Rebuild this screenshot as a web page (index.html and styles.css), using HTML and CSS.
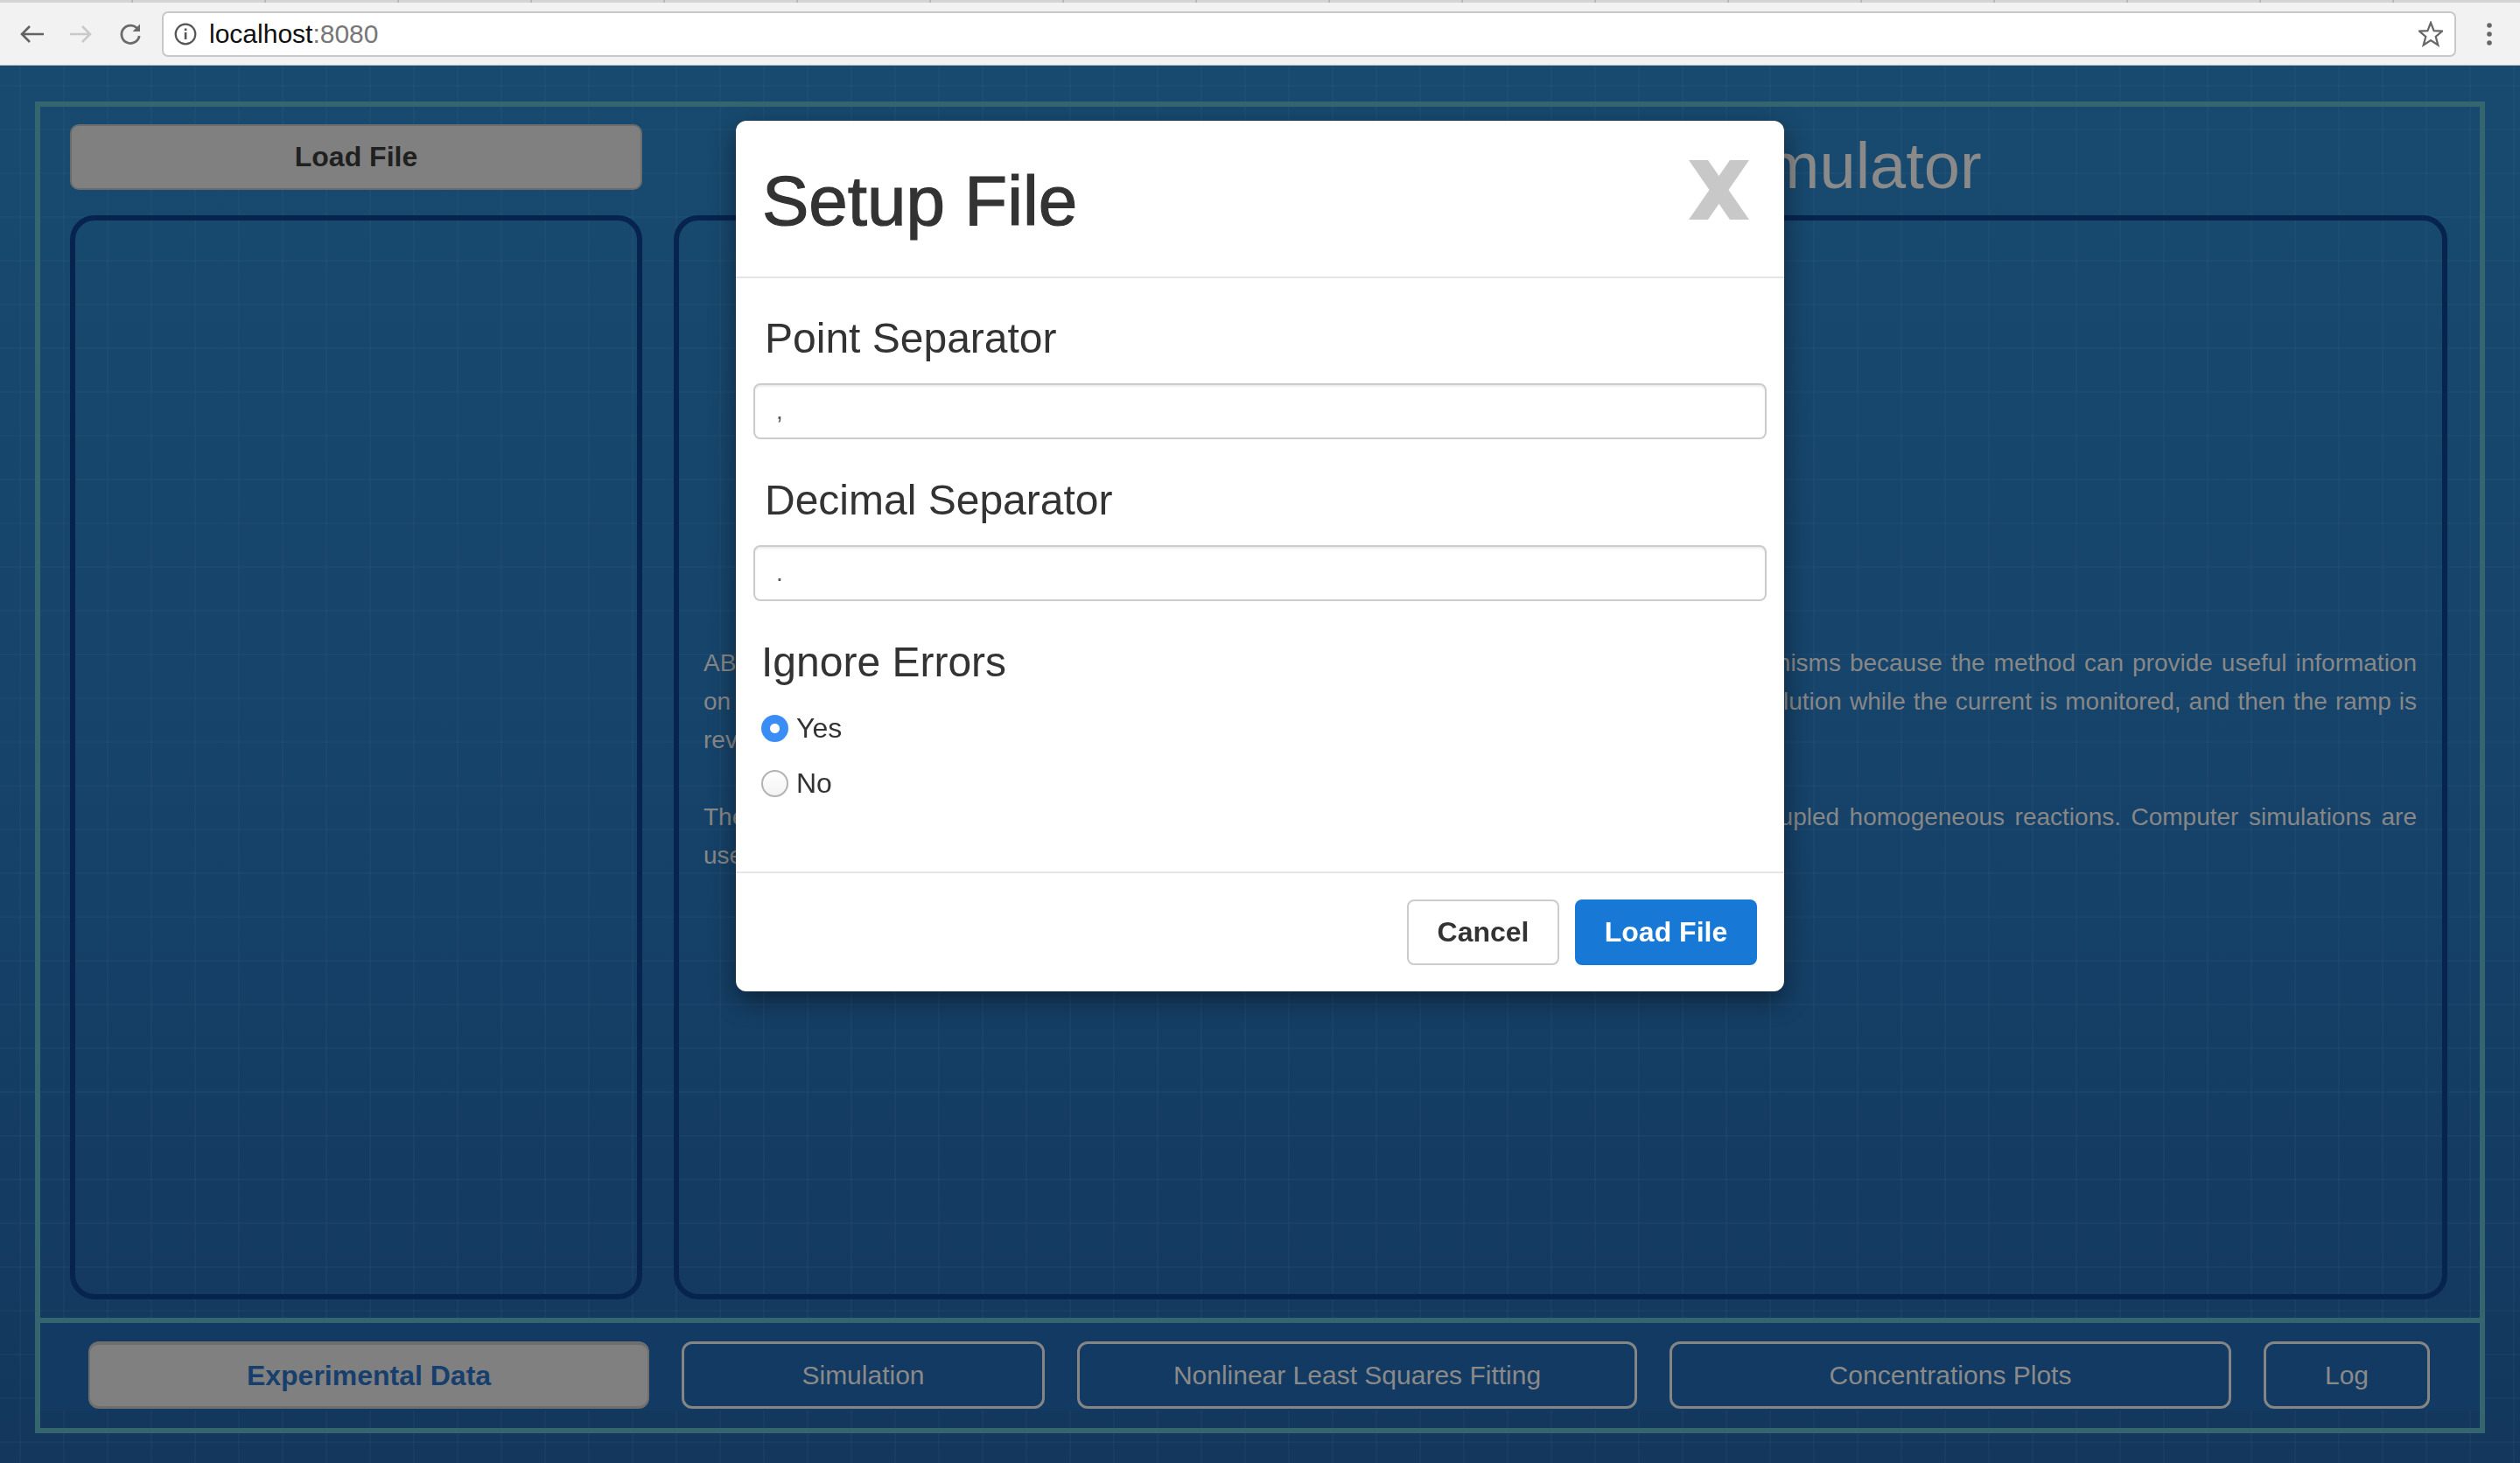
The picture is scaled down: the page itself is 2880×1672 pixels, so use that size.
FILE: index.html
```html
<!DOCTYPE html>
<html lang="en">
<head>
<meta charset="utf-8">
<title>Simulator</title>
<link rel="stylesheet" href="styles.css">
</head>
<body>
<div class="chrome">
  <div class="tabstrip"></div>
  <div class="toolbar">
    <svg class="ico ico-back" width="30" height="24" viewBox="0 0 30 24"><path d="M29 12H4M13 3L4 12l9 9" fill="none" stroke="#626262" stroke-width="2.6"/></svg>
    <svg class="ico ico-fwd" width="26" height="24" viewBox="0 0 26 24"><path d="M0 12h23M14 3l9 9-9 9" fill="none" stroke="#c9c9c9" stroke-width="2.6"/></svg>
    <svg class="ico ico-reload" width="28" height="28" viewBox="0 0 28 28"><path d="M22.6 8.6A10.2 10.2 0 1 0 24.2 16" fill="none" stroke="#6a6a6a" stroke-width="2.8"/><path d="M25 2.5V11h-8.5z" fill="#6a6a6a"/></svg>
    <div class="urlbar">
      <svg class="ico-info" width="26" height="26" viewBox="0 0 26 26"><circle cx="13" cy="13" r="11.3" fill="none" stroke="#555" stroke-width="2.2"/><rect x="11.8" y="11" width="2.6" height="8" fill="#555"/><rect x="11.8" y="6.5" width="2.6" height="2.6" fill="#555"/></svg>
      <span class="host">localhost</span><span class="port">:8080</span>
      <span class="spacer"></span>
      <svg class="ico-star" width="28" height="30" viewBox="0 0 28 30"><path d="M14 2l3.6 9.2 9.6.4-7.5 6.2 2.6 9.6L14 22l-8.3 5.4 2.6-9.6L.8 11.6l9.6-.4z" fill="none" stroke="#666" stroke-width="2.2" stroke-linejoin="miter"/></svg>
    </div>
    <svg class="ico-menu" width="8" height="26" viewBox="0 0 8 26"><circle cx="4" cy="3" r="2.8" fill="#666"/><circle cx="4" cy="13" r="2.8" fill="#666"/><circle cx="4" cy="23" r="2.8" fill="#666"/></svg>
  </div>
</div>

<div class="page">
  <div class="frame">
    <div class="main">
      <button class="btn-load">Load File</button>
      <h1 class="app-title">Cyclic Voltammetry Simulator</h1>
      <div class="panel panel-left"></div>
      <div class="panel panel-right">
        <div class="about">
          <p>
            <span class="ln">ABSTRACT: Cyclic voltammetry is widely used to examine electrochemical redox reaction mechanisms because the method can provide useful information</span>
            <span class="ln">on the thermodynamics and kinetics of a system. The potential is moved linearly in an unstirred solution while the current is monitored, and then the ramp is</span>
            <span class="ln last">reversed to return to the initial potential.</span>
          </p>
          <p>
            <span class="ln">The shape of the voltammogram depends on the rate of interfacial electron transfer and any coupled homogeneous reactions. Computer simulations are</span>
            <span class="ln last">used to interpret experimental voltammograms.</span>
          </p>
        </div>
      </div>
    </div>
    <div class="navband">
      <div class="navrow">
        <button class="tab tab-active w-wide">Experimental Data</button>
        <button class="tab w-mid">Simulation</button>
        <button class="tab w-wide2">Nonlinear Least Squares Fitting</button>
        <button class="tab w-wide3">Concentrations Plots</button>
        <button class="tab w-small">Log</button>
      </div>
    </div>
  </div>
</div>

<div class="modal-layer">
  <div class="modal">
    <div class="modal-header">
      <h2 class="modal-title">Setup File</h2>
      <button class="close" aria-label="Close"><svg width="69" height="68" viewBox="0 0 69 68"><polygon points="0,0 22,0 69,68 47,68" fill="#c8c8c8"/><polygon points="47,0 69,0 22,68 0,68" fill="#c8c8c8"/></svg></button>
    </div>
    <div class="modal-body">
      <label class="field-label">Point Separator</label>
      <input class="form-control" type="text" value=",">
      <label class="field-label field-gap">Decimal Separator</label>
      <input class="form-control" type="text" value=".">
      <div class="field-label field-gap label-ignore">Ignore Errors</div>
      <label class="radio radio-first"><span class="radio-dot checked"></span>Yes</label>
      <label class="radio"><span class="radio-dot"></span>No</label>
    </div>
    <div class="modal-footer">
      <button class="btn btn-default">Cancel</button>
      <button class="btn btn-primary">Load File</button>
    </div>
  </div>
</div>
</body>
</html>
```

FILE: styles.css
```css
* { box-sizing: border-box; }
html, body { margin: 0; padding: 0; }
body {
  width: 2880px;
  height: 1672px;
  overflow: hidden;
  font-family: "Liberation Sans", Arial, sans-serif;
  background: #13365c;
}
button { font-family: inherit; cursor: pointer; }

/* ---------- browser chrome ---------- */
.chrome {
  height: 75px;
  background: #f2f2f2;
  border-bottom: 1px solid #bcbcbc;
}
.tabstrip {
  height: 3px;
  background: #d4d4d4;
  background-image: repeating-linear-gradient(90deg, transparent 0 150px, #b8b8b8 150px 152px);
}
.toolbar {
  height: 71px;
  display: flex;
  align-items: center;
  padding: 0 31px 0 21px;
}
.ico-fwd { margin-left: 29px; }
.ico-reload { margin-left: 29px; }
.urlbar {
  margin-left: 22px;
  flex: 1;
  height: 52px;
  background: #fff;
  border: 2px solid #c8c8c8;
  border-radius: 7px;
  display: flex;
  align-items: center;
  padding: 0 13px 0 12px;
  font-size: 30px;
}
.ico-info { margin-right: 14px; }
.host { color: #111; }
.port { color: #777; }
.spacer { flex: 1; }
.ico-menu { margin-left: 34px; }

/* ---------- page ---------- */
.page {
  height: 1597px;
  padding: 41px 40px 0;
  background-color: #164268;
  background-image:
    linear-gradient(rgba(255,255,255,0.022) 2px, transparent 2px),
    linear-gradient(90deg, rgba(255,255,255,0.022) 2px, transparent 2px),
    linear-gradient(180deg, #184a6f 0%, #16436a 50%, #13375d 100%);
  background-size: 50px 50px, 50px 50px, 100% 100%;
  background-position: 22px 22px, 22px 22px, 0 0;
}
.frame {
  height: 1522px;
  border: 6px solid #35666f;
  display: flex;
  flex-direction: column;
}
.main {
  flex: 1;
  display: grid;
  grid-template-columns: 654px 1fr;
  grid-template-rows: 75px 1fr;
  column-gap: 36px;
  row-gap: 29px;
  padding: 20px 37px 21px 34px;
  border-bottom: 6px solid #35666f;
}
.btn-load {
  height: 75px;
  background: #808080;
  border: 2px solid #6c6c6c;
  border-radius: 10px;
  color: #202020;
  font-size: 32px;
  font-weight: bold;
}
.app-title {
  margin: 10px 0 0;
  font-size: 74px;
  line-height: 75px;
  font-weight: normal;
  color: #8a8a8a;
  text-align: center;
  white-space: nowrap;
}
.panel {
  border: 6px solid #07244f;
  border-radius: 28px;
}
.panel-right {
  display: flex;
  flex-direction: column;
  justify-content: center;
  padding: 5px 29px 0 28px;
}
.about p {
  margin: 0 0 44px;
  font-size: 28px;
  line-height: 44px;
  color: #878787;
}
.about p:last-child { margin-bottom: 0; }
.ln {
  display: block;
  text-align: justify;
  text-align-last: justify;
  white-space: nowrap;
}
.ln.last { text-align-last: left; }

.navband {
  height: 120px;
  padding-bottom: 20px;
}
.navrow {
  height: 100px;
  background: #133a62;
  display: flex;
  gap: 37px;
  padding: 21px 56px 0 55px;
}
.tab {
  height: 77px;
  background: transparent;
  border: 3px solid #858585;
  border-radius: 12px;
  color: #8a8a8a;
  font-size: 30px;
}
.tab-active {
  background: #808080;
  border-color: #6e6e6e;
  border-width: 4px 2px 3px;
  color: #173f6d;
  font-size: 32px;
  font-weight: bold;
}
.w-wide { width: 641px; }
.w-mid { width: 415px; }
.w-wide2 { width: 640px; }
.w-wide3 { width: 642px; }
.w-small { width: 190px; }

/* ---------- modal ---------- */
.modal-layer {
  position: fixed;
  top: 75px;
  left: 0;
  right: 0;
  bottom: 0;
  display: flex;
  justify-content: center;
  align-items: flex-start;
  padding-top: 63px;
}
.modal {
  width: 1198px;
  background: #fff;
  border-radius: 12px;
  box-shadow: 0 10px 30px rgba(0,0,0,0.45);
  color: #333;
}
.modal-header {
  display: flex;
  justify-content: space-between;
  align-items: flex-start;
  padding: 48px 30px 42px;
  border-bottom: 2px solid #e5e5e5;
}
.modal-title {
  margin: 0;
  font-size: 80px;
  line-height: 88px;
  font-weight: normal;
  color: #333;
  -webkit-text-stroke: 1.2px #333;
}
.close {
  border: 0;
  background: none;
  padding: 0;
  margin: -3px 10px 0 0;
  line-height: 0;
}
.modal-body {
  padding: 42px 20px 81px;
}
.field-label {
  display: block;
  font-size: 48px;
  line-height: 53px;
  padding-left: 13px;
  color: #333;
  margin-bottom: 25px;
}
.field-gap { margin-top: 43px; }
.label-ignore { padding-left: 9px; margin-bottom: 0; }
.form-control {
  display: block;
  width: 100%;
  height: 64px;
  border: 2px solid #ccc;
  border-radius: 8px;
  padding: 0 24px;
  font-family: "Liberation Sans", Arial, sans-serif;
  font-size: 28px;
  color: #555;
  box-shadow: inset 0 2px 2px rgba(0,0,0,0.075);
  outline: none;
}
.radio {
  display: flex;
  align-items: center;
  height: 40px;
  margin-top: 23px;
  padding-left: 9px;
  font-size: 32px;
  color: #333;
}
.radio-first { margin-top: 29px; }
.radio-dot {
  width: 31px;
  height: 31px;
  border-radius: 50%;
  margin-right: 9px;
  border: 2px solid #b3b3b3;
  background: linear-gradient(#fff, #f3f3f3);
  flex: none;
}
.radio-dot.checked {
  border: 0;
  background: radial-gradient(circle, #fff 0 5px, #3b8df6 6px);
}
.modal-footer {
  display: flex;
  justify-content: flex-end;
  gap: 18px;
  padding: 30px 31px 30px;
  border-top: 2px solid #e5e5e5;
}
.btn {
  height: 75px;
  border-radius: 8px;
  font-size: 32px;
  font-weight: bold;
  padding: 0;
}
.btn-default {
  width: 174px;
  background: #fff;
  border: 2px solid #ccc;
  color: #333;
}
.btn-primary {
  width: 208px;
  background: #1878d6;
  border: 2px solid #1878d6;
  color: #fff;
}
```
